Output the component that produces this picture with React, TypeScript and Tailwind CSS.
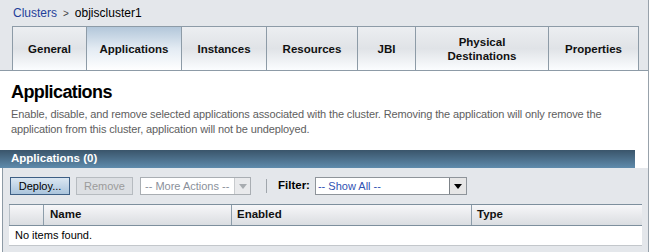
import React from 'react';

const tabs = [
  { label: 'General', w: 'w-[74px]' },
  { label: 'Applications', w: 'w-[95px]', active: true },
  { label: 'Instances', w: 'w-[85px]' },
  { label: 'Resources', w: 'w-[91px]' },
  { label: 'JBI', w: 'w-[58px]' },
  { label: 'Physical Destinations', w: 'w-[133px]', twoLine: true },
  { label: 'Properties', w: 'w-[91px]' },
];

function Arrow({ color }: { color: string }) {
  return (
    <svg width="8" height="5" viewBox="0 0 8 5">
      <path d="M0 0h8L4 5z" fill={color} />
    </svg>
  );
}

export default function App() {
  return (
    <div className="flex h-[252px] w-[651px] overflow-hidden bg-white font-['Liberation_Sans',Arial,sans-serif] text-[11px] text-black">
      <div className="flex w-[649px] flex-col border-r border-[#98a2ab]">
        {/* breadcrumb + tabs */}
        <div className="bg-[#e4e7eb]">
          <div className="flex h-[26px] items-center pl-[13px] text-[12px]">
            <a className="text-[#1f3f9a]">Clusters</a>
            <span className="mx-[6px] text-[10px] text-[#444]">&gt;</span>
            <span>objiscluster1</span>
          </div>
          <div className="flex border-b border-[#8d9ba7] pl-[12px]">
            {tabs.map((t, i) => (
              <div
                key={t.label}
                className={`flex h-[44px] items-center justify-center border-t border-l border-[#8d9ba7] text-center text-[11.5px] font-bold leading-[14px] text-[#111] ${t.w} ${
                  i === tabs.length - 1 ? 'border-r' : ''
                } ${
                  t.active
                    ? 'bg-gradient-to-b from-[#b3c7da] via-[#e3ebf3] to-[#ffffff]'
                    : 'bg-gradient-to-b from-[#eceef1] via-[#e0e3e7] to-[#fbfdff]'
                }`}
              >
                {t.twoLine ? (
                  <span>
                    Physical
                    <br />
                    Destinations
                  </span>
                ) : (
                  t.label
                )}
              </div>
            ))}
          </div>
        </div>

        {/* page title */}
        <div className="px-[11px]">
          <h1 className="mt-[10px] h-[22px] text-[18px] font-bold leading-[22px] tracking-[-0.6px] text-black">Applications</h1>
          <p className="mt-[4px] text-[11px] leading-[15px] tracking-[-0.12px] text-[#5e5e5e]">
            Enable, disable, and remove selected applications associated with the cluster. Removing the application will only remove the application from this cluster, application will not be undeployed.
          </p>
        </div>

        {/* table title */}
        <div className="mt-[13px] flex h-[18px] w-[635px] items-center bg-gradient-to-b from-[#3a556b] to-[#5f8bac] pl-[11px] text-[11.5px] font-bold text-white">
          Applications (0)
        </div>

        {/* table panel */}
        <div className="ml-[2px] flex-1 border-l border-[#8d9aa5] bg-[#e4e7eb]">
          <div className="flex h-[36px] items-center whitespace-nowrap pl-[7px]">
            <button className="h-[18px] w-[60px] border border-[#3d5f85] bg-gradient-to-b from-[#dbe7f2] to-[#aac4dc] text-[11px] text-black">
              Deploy...
            </button>
            <button className="ml-[6px] h-[18px] w-[57px] border border-[#b6bbc0] bg-[#dcdfe3] text-[11px] text-[#9b9b9b]">
              Remove
            </button>
            <div className="ml-[7px] flex h-[18px] w-[111px] items-stretch border border-[#a9aeb3] bg-white">
              <span className="flex-1 pl-[4px] text-[11px] leading-[16px] text-[#8a909a]">-- More Actions --</span>
              <span className="flex w-[16px] items-center justify-center border-l border-[#c8cbce] bg-[#e9eaec]">
                <Arrow color="#a8acb0" />
              </span>
            </div>
            <div className="ml-[15px] h-[14px] w-px bg-[#a0a6ac]" />
            <span className="ml-[11px] text-[11.5px] font-bold text-black">Filter:</span>
            <div className="ml-[5px] flex h-[18px] w-[152px] items-stretch border border-[#8e949a] bg-white">
              <span className="flex-1 pl-[2px] text-[11px] leading-[16px] text-[#2f52b3]">-- Show All --</span>
              <span className="flex w-[17px] items-center justify-center border-l border-[#7d8388] bg-[#e6e6e6]">
                <Arrow color="#000" />
              </span>
            </div>
          </div>

          <div className="ml-[6px] w-[633px]">
            <div className="flex h-[22px] items-stretch border-y border-[#7d8f9d] bg-gradient-to-b from-[#f7f7f9] to-[#dadde1] text-[11.5px] font-bold text-[#111]">
              <div className="w-[34px] border-l border-[#b8c0c7]" />
              <div className="flex w-[188px] items-center border-l border-[#8d9daa] pl-[6px]">Name</div>
              <div className="flex w-[240px] items-center border-l border-[#8d9daa] pl-[5px]">Enabled</div>
              <div className="flex flex-1 items-center border-l border-[#8d9daa] pl-[5px]">Type</div>
            </div>
            <div className="flex h-[20px] items-center border-b border-[#c3c7cb] bg-white pl-[6px] text-[11px] text-black">
              No items found.
            </div>
          </div>
        </div>
      </div>
    </div>
  );
}
